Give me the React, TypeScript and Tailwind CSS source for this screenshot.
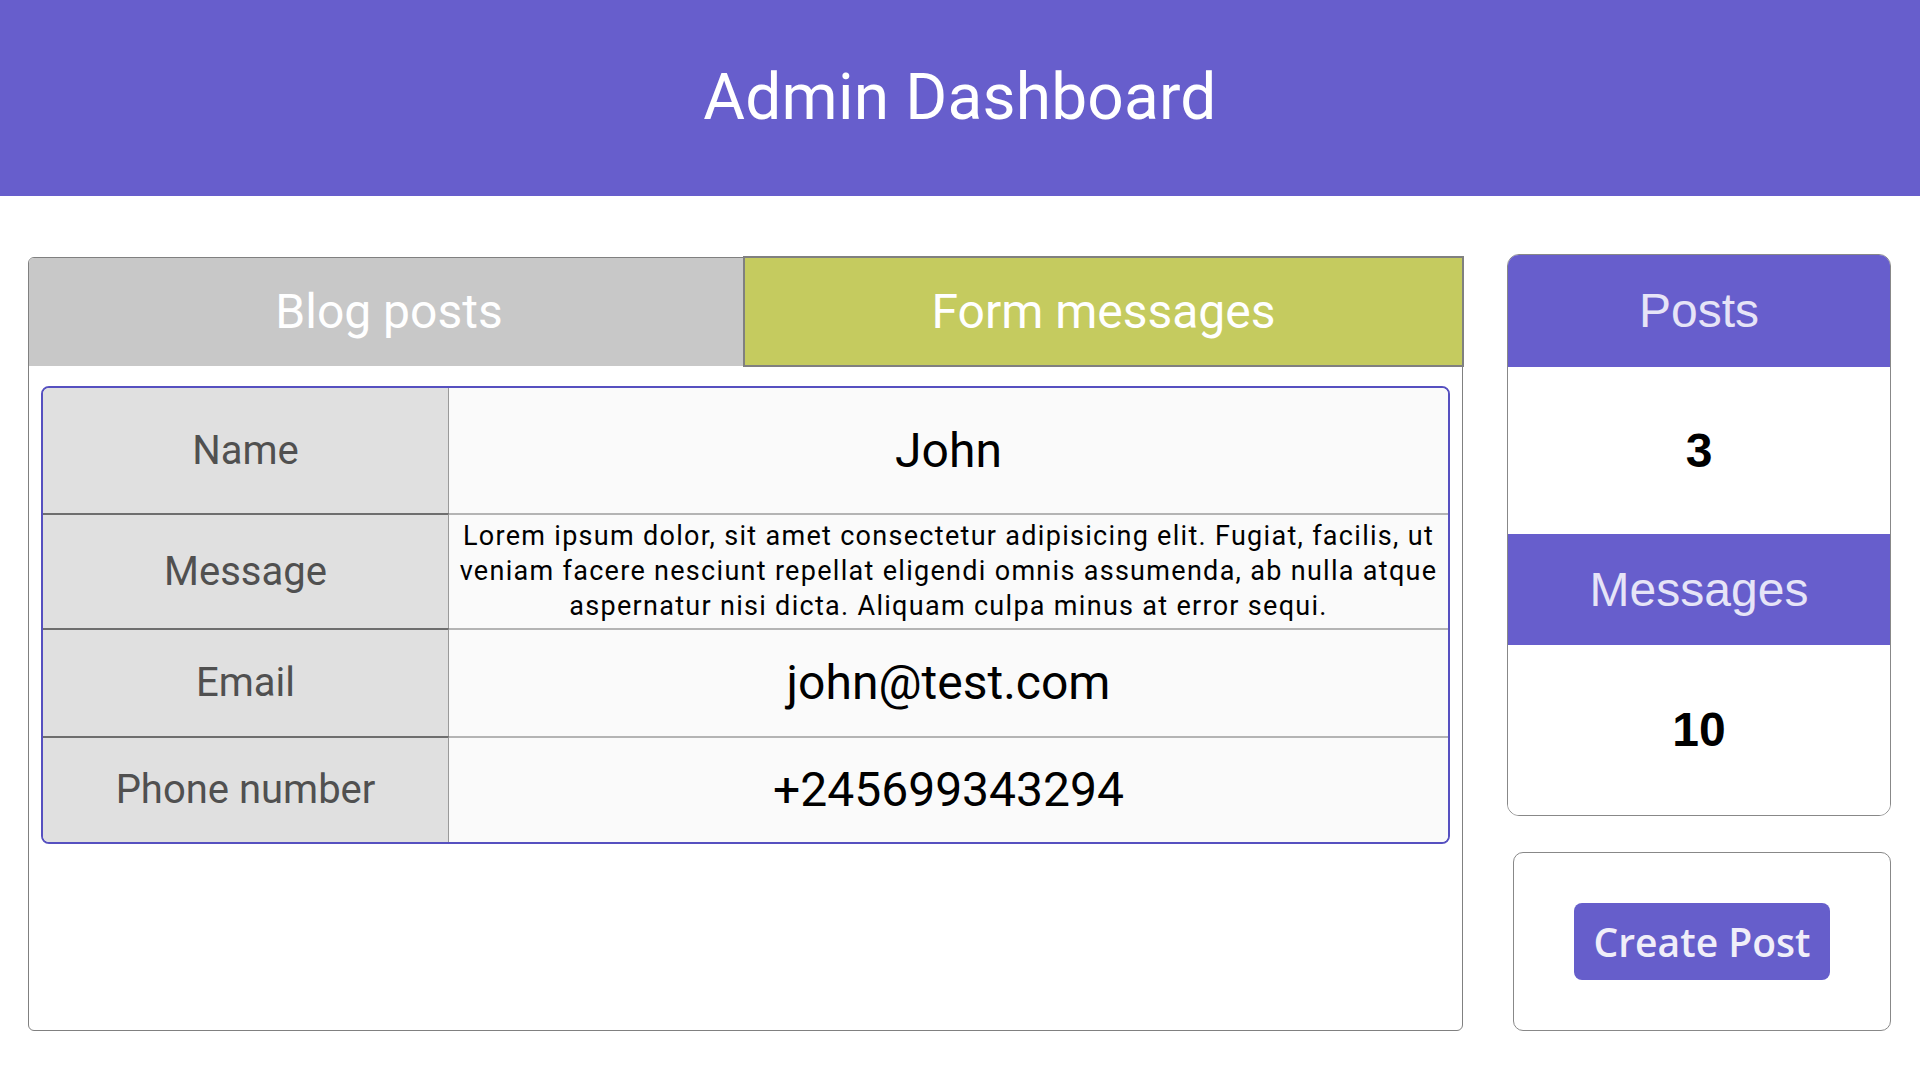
import React from "react";

const rows = [
  { label: "Name", value: "John", h: "h-[125px]", first: true },
  {
    label: "Message",
    value:
      "Lorem ipsum dolor, sit amet consectetur adipisicing elit. Fugiat, facilis, ut veniam facere nesciunt repellat eligendi omnis assumenda, ab nulla atque aspernatur nisi dicta. Aliquam culpa minus at error sequi.",
    h: "h-[115px]",
    small: true,
  },
  { label: "Email", value: "john@test.com", h: "h-[108px]" },
  { label: "Phone number", value: "+245699343294", h: "h-[106px]" },
];

export default function App() {
  return (
    <div className="min-h-screen w-full bg-white font-['Roboto',sans-serif]">
      <header className="h-[196px] bg-[#675ecc] flex items-center justify-center">
        <h1 className="text-white text-[64px] font-normal leading-none tracking-[0.2px]">Admin Dashboard</h1>
      </header>

      <main className="flex items-start pl-[28px] pr-[29px] pt-[56px] gap-[44px]">
        {/* Left panel */}
        <section className="mt-[5px] w-[1435px] h-[774px] border border-[#808080] rounded-[6px] bg-white">
          <div className="flex h-[108px]">
            <div className="w-[714px] h-[108px] bg-[#c8c8c8] rounded-tl-[5px] flex items-center justify-center pl-[6px]">
              <span className="text-white text-[48px] leading-none">Blog posts</span>
            </div>
            <div className="flex-1 h-[111px] -mt-[2px] -mr-[2px] self-start bg-[#c5cb5f] border-2 border-[#808080] flex items-center justify-center">
              <span className="text-white text-[48px] leading-none">Form messages</span>
            </div>
          </div>

          <div className="mx-[12px] mt-[20px] border-2 border-[#5650c0] rounded-[8px] overflow-hidden">
            {rows.map((r) => (
              <div key={r.label} className={`flex ${r.h}`}>
                <div
                  className={`w-[406px] shrink-0 bg-[#e0e0e0] border-r border-[#9a9a9a] flex items-center justify-center ${
                    r.first ? "" : "border-t-2 border-t-[#6e6e6e]"
                  }`}
                >
                  <span className="text-[40px] text-[#505050] leading-none">{r.label}</span>
                </div>
                <div
                  className={`flex-1 bg-[#fafafa] flex items-center justify-center ${
                    r.first ? "" : "border-t-2 border-t-[#b4b4b4]"
                  }`}
                >
                  {r.small ? (
                    <p className="text-[27px] leading-[35px] tracking-[1.3px] text-black text-center px-[3px]">
                      {r.value}
                    </p>
                  ) : (
                    <span className="text-[48px] text-black leading-none">{r.value}</span>
                  )}
                </div>
              </div>
            ))}
          </div>
        </section>

        {/* Sidebar */}
        <aside className="mt-[2px] w-[384px] flex flex-col">
          <div className="border border-[#888888] rounded-[12px] overflow-hidden font-['Liberation_Sans',Arial,sans-serif]">
            <div className="h-[112px] bg-[#675ecc] flex items-center justify-center">
              <span className="text-[48px] text-[#e6e4f7] leading-none">Posts</span>
            </div>
            <div className="h-[167px] bg-white flex items-center justify-center">
              <span className="text-[48px] font-bold text-black leading-none">3</span>
            </div>
            <div className="h-[111px] bg-[#675ecc] flex items-center justify-center">
              <span className="text-[48px] text-[#e6e4f7] leading-none">Messages</span>
            </div>
            <div className="h-[170px] bg-white flex items-center justify-center">
              <span className="text-[48px] font-bold text-black leading-none">10</span>
            </div>
          </div>

          <div className="ml-[6px] mt-[36px] h-[179px] border border-[#888888] rounded-[10px] flex items-center justify-center">
            <button className="w-[256px] h-[77px] rounded-[8px] bg-[#665ecb] flex items-center justify-center">
              <span className="font-['Open_Sans',sans-serif] font-semibold text-[39px] text-[#f0eef9] leading-none">
                Create Post
              </span>
            </button>
          </div>
        </aside>
      </main>
    </div>
  );
}
